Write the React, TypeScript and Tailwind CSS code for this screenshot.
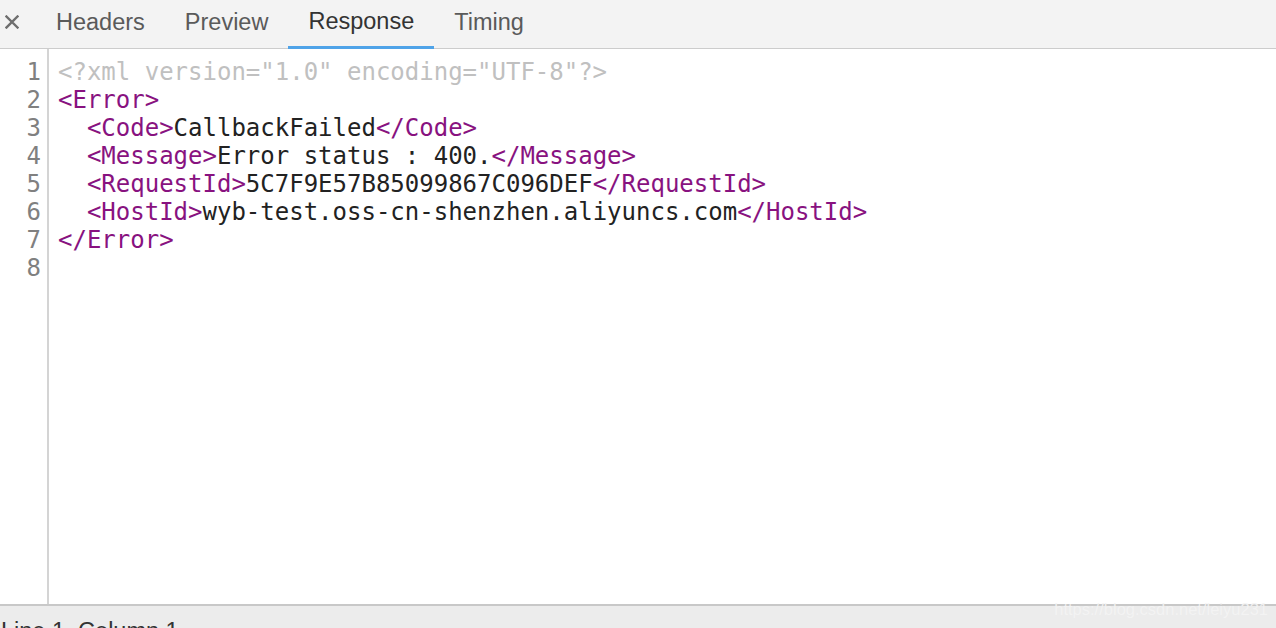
import React from "react";

const tabs = ["Headers", "Preview", "Response", "Timing"];

type Seg = { t: string; c?: "tag" | "decl" };

const lines: Seg[][] = [
  [{ t: '<?xml version="1.0" encoding="UTF-8"?>', c: "decl" }],
  [{ t: "<Error>", c: "tag" }],
  [{ t: "  " }, { t: "<Code>", c: "tag" }, { t: "CallbackFailed" }, { t: "</Code>", c: "tag" }],
  [{ t: "  " }, { t: "<Message>", c: "tag" }, { t: "Error status : 400." }, { t: "</Message>", c: "tag" }],
  [{ t: "  " }, { t: "<RequestId>", c: "tag" }, { t: "5C7F9E57B85099867C096DEF" }, { t: "</RequestId>", c: "tag" }],
  [{ t: "  " }, { t: "<HostId>", c: "tag" }, { t: "wyb-test.oss-cn-shenzhen.aliyuncs.com" }, { t: "</HostId>", c: "tag" }],
  [{ t: "</Error>", c: "tag" }],
  [],
];

export default function App() {
  return (
    <div className="w-[1276px] h-[628px] overflow-hidden flex flex-col bg-white">
      {/* tab strip */}
      <div className="h-[49px] shrink-0 flex items-stretch bg-[#f3f3f3] border-b border-[#cccccc] font-['Liberation_Sans',Arial,sans-serif] text-[23.5px]">
        <div className="w-[36px] flex items-center pl-[5px] pb-[4px]">
          <svg width="14" height="14" viewBox="0 0 14 14">
            <path d="M1.5 1.5 L12.5 12.5 M12.5 1.5 L1.5 12.5" stroke="#6e6e6e" strokeWidth="2.4" strokeLinecap="square" />
          </svg>
        </div>
        {tabs.map((t) => (
          <div
            key={t}
            className={
              t === "Response"
                ? "px-[20px] flex items-center pb-[3px] text-[#333333] border-b-[3px] border-[#4fa3e8] mb-[-1px]"
                : "px-[20px] flex items-center pb-[3px] text-[#5a5a5a]"
            }
          >
            {t}
          </div>
        ))}
      </div>

      {/* code view */}
      <div className="flex-1 flex min-h-0 font-['DejaVu_Sans_Mono',Menlo,monospace] text-[24px] leading-[28px]">
        <div className="w-[49px] shrink-0 border-r-2 border-[#d4d4d4] pt-[9px] pr-[6px] text-right text-[#808080]">
          {lines.map((_, i) => (
            <div key={i}>{i + 1}</div>
          ))}
        </div>
        <div className="flex-1 pl-[9px] pt-[9px] whitespace-pre text-[#222222]">
          {lines.map((l, i) => (
            <div key={i} className="h-[28px]">
              {l.map((s, j) => (
                <span
                  key={j}
                  className={s.c === "tag" ? "text-[#881280]" : s.c === "decl" ? "text-[#c0c0c0]" : ""}
                >
                  {s.t}
                </span>
              ))}
            </div>
          ))}
        </div>
      </div>

      {/* status bar */}
      <div className="relative h-[24px] shrink-0 bg-[#ececec] border-t-2 border-[#c8c8c8] font-['Liberation_Sans',Arial,sans-serif] text-[23.5px] text-[#333333] pl-[1px] pt-[12px] leading-[26px] overflow-visible">
        <span className="whitespace-nowrap">Line 1, Column 1</span>
        <span className="absolute right-[8px] top-[-8px] text-[16.5px] leading-[22px] text-[#f4f4f4] opacity-90 whitespace-nowrap">
          https://blog.csdn.net/leiyu231
        </span>
      </div>
    </div>
  );
}
